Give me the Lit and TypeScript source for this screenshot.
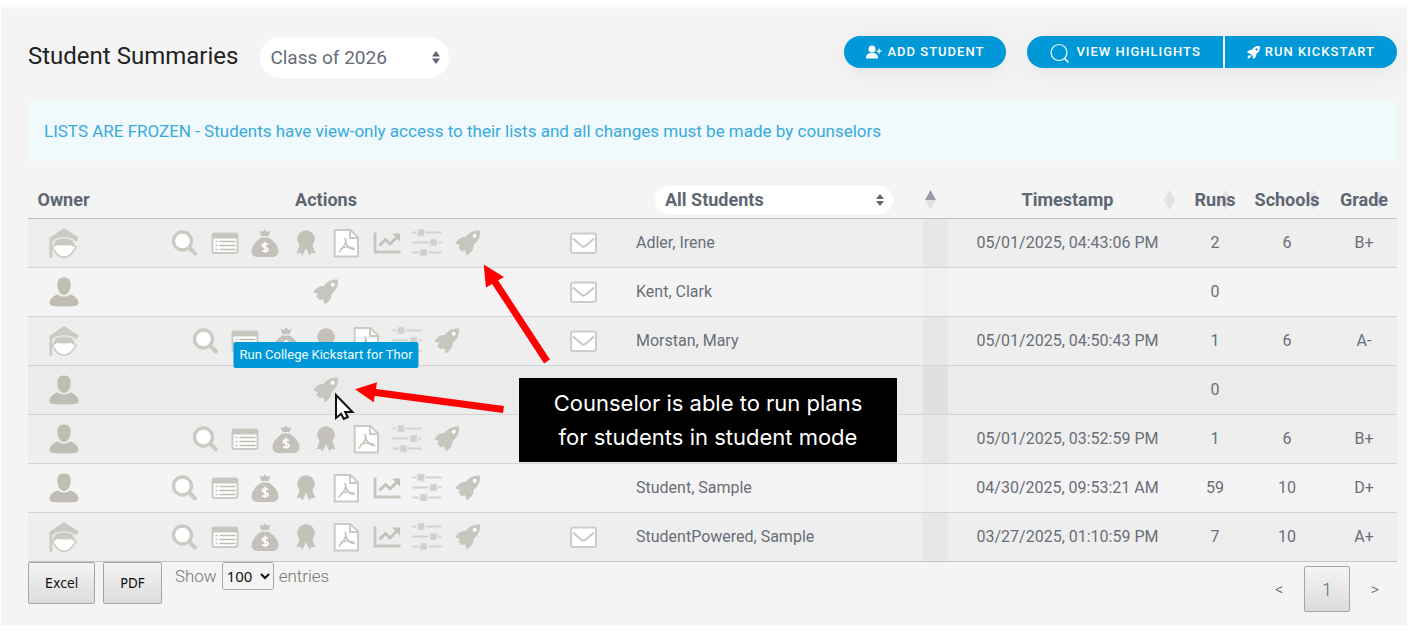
import { LitElement, html, svg, css, nothing } from "lit";
import { customElement, property } from "lit/decorators.js";

type IconName =
  | "grad" | "person" | "search" | "list" | "money" | "award"
  | "pdf" | "chart" | "sliders" | "rocket" | "mail";

const shapes: Record<IconName, unknown> = {
  grad: svg`
    <path d="M15 0 29.700 9.500 28 13H3.200V29.500l-2.700.8V10Z" fill="#cbcac2"/>
    <path d="M4 18c1-10 21-10 22 0l2 .3c-.5 3-1.500 4-2.800 4.500-2 4.500-6 7.200-10.200 7.200S6.800 27.300 4.800 22.800C3.500 22.300 2.800 21 2.500 18.300Z" fill="#cbcac2"/>
    <path d="M4.500 18.700c2.500 0 3-1.700 3-1.700 5 .8 10 .8 15 0 0 0 .5 1.700 3.500 1.700-.5 2.300-1 3-2 3.300C22 26 18.500 28.300 15 28.300S8 26 6.200 22c-1-.3-1.500-1-1.700-3.300Z" fill="#fff"/>
    <path d="M4.500 12.800c5-3.800 16-3.800 21 0" fill="none" stroke="#ebebe8" stroke-width="1.300"/>`,
  person: svg`
    <path d="M15 .5c5 0 7 3 6.700 8-.3 5-3 9.500-6.700 9.500s-6.400-4.500-6.700-9.500C8 3.500 10 .5 15 .5Z" fill="#bfbdb4"/>
    <path d="M9 17.500c3.500 3 8.500 3 12 0 5 1.300 8.500 4.500 8.500 8.500 0 2.500-2 3.500-14.500 3.500S.5 28.500.5 26C.5 22 4 18.800 9 17.500Z" fill="#bfbdb4"/>`,
  search: svg`
    <path d="m19 18.500 6 6" stroke="#cbcac3" stroke-width="4" stroke-linecap="round"/>
    <circle cx="12.500" cy="12" r="9" fill="#fff" stroke="#cbcac3" stroke-width="3.400"/>`,
  list: svg`
    <rect x="1.500" y="4.500" width="25" height="19.500" rx="2" fill="#fff" stroke="#cbcac3" stroke-width="2"/>
    <path d="M1.500 4.500h25V9.500h-25Z" fill="#c7c6be"/>
    <path d="M8.500 12.500h16M8.500 16.500h16M8.500 20.500h16M4.500 12.500h2M4.500 16.500h2M4.500 20.500h2" stroke="#bdbcb4" stroke-width="1.500"/>`,
  money: svg`
    <path d="M8.500 1.500 11.500 3 14 .5 16.500 3l3-1.500-2 5.500h-7Z" fill="#c3c1b9"/>
    <path d="M10.500 8.500h7c5 3 10 8.500 10 13.500 0 4-3 6-6 6h-15c-3 0-6-2-6-6 0-5 5-10.500 10-13.500Z" fill="#c3c1b9"/>
    <path d="M16.800 15.800c-.8-1.300-5.300-1.600-5.300.8 0 2.500 5.500 1.300 5.500 4 0 2.400-4.700 2.400-5.800.8M14.200 12.800v11" fill="none" stroke="#fff" stroke-width="1.700"/>`,
  award: svg`
    <path d="m8 15-3.500 9.500 4-.7 2 3L14 19l3.500 7.800 2-3 4 .7L20 15Z" fill="#c5c4bc"/>
    <path d="m14 1 3 1 3 1.200 1.500 2.800 1.500 3-.7 3.200-1.300 3-2.700 2L14 18.500l-4.300-1.300-2.700-2-1.300-3L5 9l1.500-3L8 3.200 11 2Z" fill="#c3c1b9"/>`,
  pdf: svg`
    <path d="M2.700 1h15.800l7.500 7.500V27.500H2.700Z" fill="#fff" stroke="#cbcac3" stroke-width="2" stroke-linejoin="round"/>
    <path d="M18 1v8h8" fill="none" stroke="#cbcac3" stroke-width="2"/>
    <path d="M13 9.500c2 2 0 8-6 13.500M13.500 12c1 5 4 8 9 8.500M9 19.500c4-2 8-2 13 0" fill="none" stroke="#c5c4bc" stroke-width="1.600" stroke-linecap="round"/>`,
  chart: svg`
    <path d="M2 3.500V23h25.500" fill="none" stroke="#c7c6be" stroke-width="2.800"/>
    <path d="m6.500 16.500 6-6 4.500 4.500 7-7" fill="none" stroke="#c3c1b9" stroke-width="2.800"/>
    <path d="M19 4.500H27V12.500Z" fill="#c3c1b9"/>`,
  sliders: svg`
    <g fill="#d2d2d0"><path d="M-.5 2.500h29v2H-.5zM-.5 12.500h29v2H-.5zM-.5 22.500h29v2H-.5z"/></g>
    <g stroke="#ededed" stroke-width="1.500" fill="#d0d0ce"><rect x="4" y="-.5" width="8" height="8"/><rect x="16.500" y="9.500" width="8" height="8"/><rect x="6.500" y="19.500" width="8" height="8"/></g>`,
  rocket: svg`
    <path d="M26 1.500c.5 6-1.500 10.500-6.500 14.500.5 4-2 7-6.500 10.500l-2.200-5.500-2.800 1.500-3.700-3.700L6 16 1.500 14.500C4 10 7 7.500 11.500 8c4-5 8.500-7 14.500-6.500Z" fill="#c7c6be"/>
    <circle cx="20.700" cy="6.700" r="2" fill="#fff"/>`,
  mail: svg`
    <rect x="2" y="4.500" width="25" height="19.500" rx="2.200" fill="#fff" stroke="#cdcdc8" stroke-width="2"/>
    <path d="m4 9.500 9 7.700q1.500 1 3 0l9-7.700" fill="none" stroke="#c8c7c1" stroke-width="2"/>`,
};

const labels: Record<IconName, string> = {
  grad: "Student", person: "Counselor", search: "View", list: "College list", money: "Aid",
  award: "Merit", pdf: "PDF report", chart: "Trends", sliders: "Settings",
  rocket: "Run College Kickstart", mail: "Send email",
};

const icon = (name: IconName, size = 28) => html`<svg
  width=${size} height=${size} viewBox="0 0 ${size} ${size}" overflow="visible" aria-hidden="true">${shapes[name]}</svg>`;

interface Student {
  owner: IconName;
  actions: IconName[];
  mail: boolean;
  name: string;
  stamp: string;
  runs: string;
  schools: string;
  grade: string;
  tip?: string;
}

const full: IconName[] = ["search", "list", "money", "award", "pdf", "chart", "sliders", "rocket"];
const noChart = full.filter((n) => n !== "chart");

const students: Student[] = [
  { owner: "grad", actions: full, mail: true, name: "Adler, Irene", stamp: "05/01/2025, 04:43:06 PM", runs: "2", schools: "6", grade: "B+" },
  { owner: "person", actions: ["rocket"], mail: true, name: "Kent, Clark", stamp: "", runs: "0", schools: "", grade: "" },
  { owner: "grad", actions: noChart, mail: true, name: "Morstan, Mary", stamp: "05/01/2025, 04:50:43 PM", runs: "1", schools: "6", grade: "A-" },
  { owner: "person", actions: ["rocket"], mail: false, name: "", stamp: "", runs: "0", schools: "", grade: "", tip: "Run College Kickstart for Thor" },
  { owner: "person", actions: noChart, mail: false, name: "", stamp: "05/01/2025, 03:52:59 PM", runs: "1", schools: "6", grade: "B+" },
  { owner: "person", actions: full, mail: false, name: "Student, Sample", stamp: "04/30/2025, 09:53:21 AM", runs: "59", schools: "10", grade: "D+" },
  { owner: "grad", actions: full, mail: true, name: "StudentPowered, Sample", stamp: "03/27/2025, 01:10:59 PM", runs: "7", schools: "10", grade: "A+" },
];

@customElement("student-table")
class StudentTable extends LitElement {
  @property({ attribute: false }) rows: Student[] = [];

  static styles = css`
    :host { display: block; }
    table { width: 100%; table-layout: fixed; border-collapse: separate; border-spacing: 0; border-bottom: 1px solid #c4c4c4; }
    .c-owner { width: 71px; } .c-actions { width: 454px; } .c-mail { width: 60px; }
    .c-name { width: 310px; } .c-sort { width: 25px; } .c-time { width: 239px; }
    .c-runs { width: 56px; } .c-schools { width: 88px; } .c-grade { width: 66px; }
    th, td { padding: 0; text-align: center; vertical-align: middle; }
    th { position: relative; height: 37px; border-bottom: 1px solid #bfbfbf; font-size: 18px; font-weight: 700; line-height: 24px; color: #5f6673; }
    td { height: 48px; border-bottom: 1px solid #d3d3d3; font-size: 16px; line-height: 24px; color: #696e78; }
    tr:last-child td { border-bottom: 0; }
    tbody tr { background: #f4f4f4; }
    tbody tr:nth-child(odd) { background: #eeeeee; }
    tbody tr.hovered { background: #ebebeb; }
    .sorted { background: #f0f0f0; }
    tr:nth-child(odd) .sorted { background: #e7e7e7; }
    tr.hovered .sorted { background: #e0e0e0; }
    td.name { text-align: left; padding-left: 23px; }
    .actions { font-size: 18px; }
    svg { display: block; }
    .owner svg { margin: 0 auto; }
    .act { position: relative; display: inline-block; vertical-align: middle; padding: 0 4px; border: 0; background: none; cursor: pointer; }
    .tip { position: absolute; z-index: 2; left: 50%; bottom: 36px; transform: translateX(-50%); padding: 0 6px; border-radius: 2px;
      background: #0098d6; color: #f2fbff; font: 400 13px/26px Roboto, sans-serif; white-space: nowrap; }
    .sort { position: absolute; top: 9px; right: 12px; }
    .filter { position: relative; display: flex; width: 238px; margin: 0 auto; left: 6px; }
    .filter select { appearance: none; width: 100%; height: 28px; padding: 0 10px; border: 0; border-radius: 14px; background: #fff;
      font: 700 18px/28px Roboto, sans-serif; color: #5f6673; }
    .filter svg { position: absolute; right: 9px; top: 8px; pointer-events: none; }
  `;

  private sort(active = false) {
    return html`<svg class="sort" width="11" height="20" viewBox="0 0 11 20" aria-hidden="true">
      <path d="M5.500 0 11 10H0Z" fill=${active ? "#9a9da4" : "#5f6673"} fill-opacity=${active ? 1 : 0.12} />
      <path d="M0 10h11L5.500 20Z" fill="#5f6673" fill-opacity=".12" />
    </svg>`;
  }

  render() {
    return html`
      <table>
        <colgroup>
          <col class="c-owner" /><col class="c-actions" /><col class="c-mail" /><col class="c-name" /><col class="c-sort" />
          <col class="c-time" /><col class="c-runs" /><col class="c-schools" /><col class="c-grade" />
        </colgroup>
        <thead>
          <tr>
            <th>Owner</th>
            <th>Actions</th>
            <th></th>
            <th>
              <span class="filter">
                <select aria-label="Filter students"><option>All Students</option></select>
                <svg width="8" height="12" viewBox="0 0 8 12" aria-hidden="true"><path d="M4 0l4 5H0ZM0 7h8L4 12Z" fill="#5f6673" /></svg>
              </span>
            </th>
            <th>${this.sort(true)}</th>
            <th>Timestamp${this.sort()}</th>
            <th>Runs${this.sort()}</th>
            <th>Schools${this.sort()}</th>
            <th>Grade${this.sort()}</th>
          </tr>
        </thead>
        <tbody>
          ${this.rows.map((r) => html`
            <tr class=${r.tip ? "hovered" : ""}>
              <td class="owner">${icon(r.owner, 30)}</td>
              <td class="actions">${r.actions.map((a) => html`<button class="act" aria-label=${labels[a]}>${icon(a)}${r.tip ? html`<span class="tip" role="tooltip">${r.tip}</span>` : nothing}</button> `)}</td>
              <td>${r.mail ? html`<button class="act" aria-label=${labels.mail}>${icon("mail")}</button>` : nothing}</td>
              <td class="name">${r.name}</td>
              <td class="sorted"></td>
              <td>${r.stamp}</td>
              <td>${r.runs}</td>
              <td>${r.schools}</td>
              <td>${r.grade}</td>
            </tr>`)}
        </tbody>
      </table>
    `;
  }
}

@customElement("app-root")
class AppRoot extends LitElement {
  static styles = css`
    :host { display: block; position: relative; padding: 4px 8px 8px 1px; background: #fff; font-family: Roboto, sans-serif; color: #5f6673; }
    .panel { padding: 27px 10px 13px 27px; border-top: 5px solid #f9f9f9; background: #f4f4f4; }
    header { display: flex; align-items: flex-start; }
    h1 { margin: 4px 22px 0 0; font-size: 24px; line-height: 32px; font-weight: 400; color: #222; }
    .year { position: relative; display: flex; margin-top: 1px; width: 189px; }
    .year select { appearance: none; width: 100%; height: 41px; padding: 0 10px; border: 0; border-radius: 21px; background: #fff;
      font: 400 19px/41px Roboto, sans-serif; color: #666c77; }
    .year svg { position: absolute; right: 9px; top: 14px; pointer-events: none; }
    .tools { display: flex; gap: 21px; margin-left: auto; }
    .group { display: flex; gap: 2px; border-radius: 16px; box-shadow: 0 4px 28px rgba(0, 0, 0, 0.07); }
    .cta { display: flex; align-items: center; justify-content: center; gap: 5px; height: 32px; padding: 0 22px; border: 0;
      background: #0098d6; color: #fff; font: 500 13px/32px Roboto, sans-serif; letter-spacing: 1px; white-space: nowrap; }
    .cta:first-child { border-top-left-radius: 16px; border-bottom-left-radius: 16px; }
    .cta:last-child { border-top-right-radius: 16px; border-bottom-right-radius: 16px; }
    .cta .lens { margin-right: 2px; }
    .notice { margin: 23px 0 20px; padding: 0 16px; background: #f0f9fc; color: #38abdd; font-size: 17px; font-weight: 400; line-height: 60px; }
    footer { display: flex; align-items: flex-start; }
    .export { height: 42px; margin-right: 8px; padding: 0 16px; border: 1px solid #a5a5a5; border-radius: 2px;
      background: linear-gradient(#f4f4f4, #dcdcdc); font: 14px "DejaVu Sans Condensed", "Noto Sans", sans-serif; color: #111; }
    .length { display: flex; align-items: center; gap: 5px; margin-left: 5px; font-size: 17px; font-weight: 300; line-height: 28px; color: #777; }
    .length select { width: 52px; height: 28px; border: 1px solid #aaa; border-radius: 3px; background: #f4f4f4; color: #111;
      font: 15px "Noto Sans", sans-serif; }
    .pager { display: flex; align-items: center; margin: 4px 7px 0 auto; }
    .step { width: 30px; height: 46px; border: 0; padding: 0; background: none; font: 300 16px Roboto, sans-serif; color: #555; }
    .current { width: 46px; height: 46px; margin: 0 10px; border: 1px solid #a5a5a5; border-radius: 2px;
      background: linear-gradient(#f4f4f4, #dcdcdc); font: 300 18px Roboto, sans-serif; color: #5f6673; }
    .arrows { position: absolute; z-index: 3; left: 0; top: 0; pointer-events: none; }
    .callout { position: absolute; z-index: 3; left: 519px; top: 378px; width: 378px; margin: 0; padding: 8px 0; background: #000; color: #fff;
      font-family: Inter, sans-serif; font-size: 22px; line-height: 34px; text-align: center; }
  `;

  render() {
    return html`
      <main class="panel">
        <header>
          <h1>Student Summaries</h1>
          <span class="year">
            <select aria-label="Class"><option>Class of 2026</option></select>
            <svg width="8" height="13" viewBox="0 0 8 13" aria-hidden="true"><path d="M4 0l4 5.500H0ZM0 7.500h8L4 13Z" fill="#5f6673" /></svg>
          </span>
          <div class="tools">
            <div class="group">
              <button class="cta">
                <svg width="16" height="14" viewBox="0 0 16 14" aria-hidden="true">
                  <circle cx="6" cy="4" r="3.500" fill="#fff" /><path d="M0 13.500C0 9.500 2 8 6 8s6 1.500 6 5.500ZM12.500 3.500h1.200v2h2v1.200h-2v2h-1.200v-2h-2V5.500h2Z" fill="#fff" />
                </svg>
                ADD STUDENT
              </button>
            </div>
            <div class="group">
              <button class="cta">
                <svg class="lens" width="20" height="20" viewBox="0 0 20 20" overflow="visible" aria-hidden="true">
                  <circle cx="10" cy="10.500" r="8" fill="none" stroke="#fff" stroke-width="1.200" /><path d="m15.500 16.500 4 4" stroke="#fff" stroke-width="1.400" />
                </svg>
                VIEW HIGHLIGHTS
              </button>
              <button class="cta">
                <svg width="13" height="13" viewBox="0 0 13 13" aria-hidden="true">
                  <path fill-rule="evenodd" d="M12.800.2c.4 3.300-.7 6-3.600 7.800.4 2.200-.6 3.700-3 5L5.500 10 3 7.500 0 6.800C1.300 4.400 2.800 3.400 5 3.800 6.800.9 9.500-.2 12.800.2ZM9.600 2.300a1.100 1.100 0 1 0 0 2.200 1.100 1.100 0 0 0 0-2.200ZM2.800 9l1.300 1.300C3.500 12 2 12.500.5 12.500.500 11 1 9.500 2.800 9Z" fill="#fff" />
                </svg>
                RUN KICKSTART
              </button>
            </div>
          </div>
        </header>
        <div class="notice" role="status">LISTS ARE FROZEN - Students have view-only access to their lists and all changes must be made by counselors</div>
        <student-table .rows=${students}></student-table>
        <footer>
          <button class="export">Excel</button>
          <button class="export">PDF</button>
          <label class="length">Show <select><option>100</option></select> entries</label>
          <nav class="pager" aria-label="Pages">
            <button class="step" aria-label="Previous page">&lt;</button>
            <button class="current" aria-current="page">1</button>
            <button class="step" aria-label="Next page">&gt;</button>
          </nav>
        </footer>
      </main>
      <svg class="arrows" width="560" height="430" viewBox="0 0 560 430" aria-hidden="true">
        <path d="M547 361.500 493 279M503.500 409.500 372 392" stroke="#f00" stroke-width="7" />
        <path d="M483.700 264.500 504 277l-18 10.500ZM355 389.300l22-7-3.300 20Z" fill="#f00" />
        <path d="M336 395v23l5.200-4.200 2.600 5.200 4-2-2.600-5h7.300Z" fill="#fff" stroke="#111" stroke-width="2" />
      </svg>
      <p class="callout">Counselor is able to run plans<br />for students in student mode</p>
    `;
  }
}
